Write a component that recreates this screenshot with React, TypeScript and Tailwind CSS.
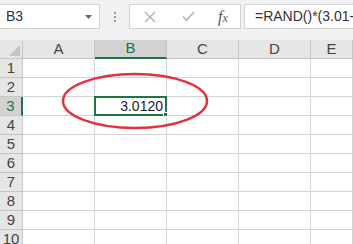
import React from "react";

const cols = ["A", "B", "C", "D", "E"];
const rows = [1, 2, 3, 4, 5, 6, 7, 8, 9, 10];

export default function App() {
  return (
    <div
      className="w-[353px] h-[244px] overflow-hidden bg-white relative"
      style={{ fontFamily: "'Liberation Sans', Arial, sans-serif" }}
    >
      {/* toolbar */}
      <div className="h-[40px] bg-[#f1f1f1] flex items-start pt-[4px]">
        <div className="w-[100px] h-[25px] bg-white border border-[#d4d4d4] border-l-0 flex items-center justify-between pl-[6px] pr-[7px]">
          <span className="text-[14px] text-[#333]">B3</span>
          <svg width="7" height="4" viewBox="0 0 7 4">
            <path d="M0 0 H7 L3.5 4 Z" fill="#666" />
          </svg>
        </div>
        <div className="w-[29px] h-[25px] flex flex-col items-center justify-center gap-[2px]">
          <div className="w-[2px] h-[2px] bg-[#9a9a9a]" />
          <div className="w-[2px] h-[2px] bg-[#9a9a9a]" />
          <div className="w-[2px] h-[2px] bg-[#9a9a9a]" />
        </div>
        <div className="w-[112px] h-[25px] bg-white border border-[#d4d4d4] flex items-center">
          <div className="w-[40px] flex justify-center">
            <svg width="12" height="12" viewBox="0 0 12 12">
              <path d="M1 1 L11 11 M11 1 L1 11" stroke="#b0b0b0" strokeWidth="1.4" />
            </svg>
          </div>
          <div className="w-[36px] flex justify-center">
            <svg width="13" height="11" viewBox="0 0 13 11">
              <path d="M1 5.5 L4.5 9.5 L12 1" stroke="#b0b0b0" strokeWidth="1.4" fill="none" />
            </svg>
          </div>
          <div className="flex-1 flex justify-center">
            <span
              className="text-[16px] italic text-[#555]"
              style={{ fontFamily: "'Liberation Serif', serif" }}
            >
              f<span className="text-[12px]">x</span>
            </span>
          </div>
        </div>
        <div className="w-[3px]" />
        <div className="flex-1 h-[25px] bg-white border border-[#d4d4d4] border-r-0 flex items-center pl-[10px] whitespace-nowrap overflow-hidden">
          <span className="text-[14px] text-[#333]">=RAND()*(3.01-3)+3</span>
        </div>
      </div>

      {/* grid */}
      <div className="grid grid-cols-[23px_72px_72px_72px_72px_1fr] text-[15px] text-[#444]">
        {/* header row */}
        <div className="h-[19px] bg-[#e6e6e6] border-r border-b border-[#c6c6c6] relative">
          <svg className="absolute right-[2px] bottom-[2px]" width="11" height="11" viewBox="0 0 11 11">
            <path d="M11 0 V11 H0 Z" fill="#c4c4c4" />
          </svg>
        </div>
        {cols.map((c) =>
          c === "B" ? (
            <div
              key={c}
              className="h-[19px] bg-[#d2d2d2] border-r border-[#c6c6c6] border-b-2 border-b-[#217346] flex items-center justify-center text-[#217346]"
            >
              {c}
            </div>
          ) : (
            <div
              key={c}
              className="h-[19px] bg-[#e6e6e6] border-r border-b border-[#c6c6c6] flex items-center justify-center"
            >
              {c}
            </div>
          )
        )}
        {rows.map((r) => (
          <React.Fragment key={r}>
            {r === 3 ? (
              <div className="h-[19px] bg-[#d2d2d2] border-r-2 border-r-[#217346] border-b border-[#c6c6c6] flex items-center justify-center text-[#217346]">
                {r}
              </div>
            ) : (
              <div className="h-[19px] bg-[#e6e6e6] border-r border-b border-[#c6c6c6] flex items-center justify-center">
                {r}
              </div>
            )}
            {cols.map((c) => (
              <div
                key={c}
                className="h-[19px] border-r border-b border-[#d4d4d4] relative"
              >
                {r === 3 && c === "B" && (
                  <div className="absolute left-[-1px] top-[-1px] right-[-1px] bottom-[-1px] border-2 border-[#217346] flex items-center justify-end pr-[2px] z-10">
                    <span className="text-[14px] text-[#222]">3.0120</span>
                    <div className="absolute right-[-3px] bottom-[-3px] w-[5px] h-[5px] bg-[#217346] border border-white" />
                  </div>
                )}
              </div>
            ))}
          </React.Fragment>
        ))}
      </div>

      {/* red ellipse annotation */}
      <svg className="absolute left-0 top-0 pointer-events-none z-20" width="353" height="244">
        <ellipse cx="135" cy="101" rx="72" ry="27" fill="none" stroke="#e2323f" strokeWidth="2.5" />
      </svg>
    </div>
  );
}
